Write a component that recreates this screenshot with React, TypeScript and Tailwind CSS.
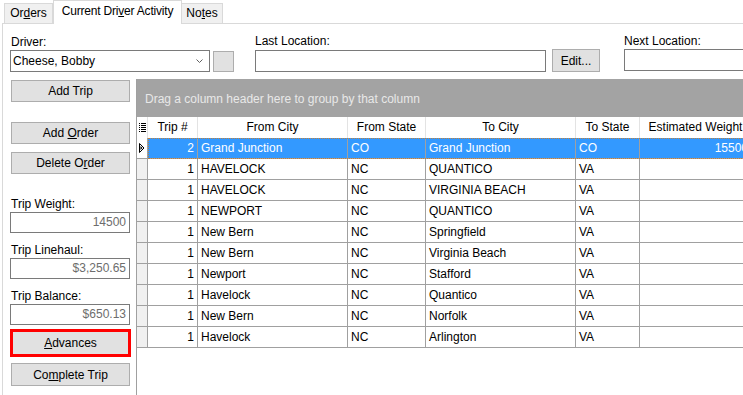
import React from 'react'

type Row = {
  trip: string
  fromCity: string
  fromState: string
  toCity: string
  toState: string
  weight: string
}

const rows: Row[] = [
  { trip: '2', fromCity: 'Grand Junction', fromState: 'CO', toCity: 'Grand Junction', toState: 'CO', weight: '15500' },
  { trip: '1', fromCity: 'HAVELOCK', fromState: 'NC', toCity: 'QUANTICO', toState: 'VA', weight: '' },
  { trip: '1', fromCity: 'HAVELOCK', fromState: 'NC', toCity: 'VIRGINIA BEACH', toState: 'VA', weight: '' },
  { trip: '1', fromCity: 'NEWPORT', fromState: 'NC', toCity: 'QUANTICO', toState: 'VA', weight: '' },
  { trip: '1', fromCity: 'New Bern', fromState: 'NC', toCity: 'Springfield', toState: 'VA', weight: '' },
  { trip: '1', fromCity: 'New Bern', fromState: 'NC', toCity: 'Virginia Beach', toState: 'VA', weight: '' },
  { trip: '1', fromCity: 'Newport', fromState: 'NC', toCity: 'Stafford', toState: 'VA', weight: '' },
  { trip: '1', fromCity: 'Havelock', fromState: 'NC', toCity: 'Quantico', toState: 'VA', weight: '' },
  { trip: '1', fromCity: 'New Bern', fromState: 'NC', toCity: 'Norfolk', toState: 'VA', weight: '' },
  { trip: '1', fromCity: 'Havelock', fromState: 'NC', toCity: 'Arlington', toState: 'VA', weight: '' },
]

const cols: { key: keyof Row; label: string; width: string; align: string }[] = [
  { key: 'trip', label: 'Trip #', width: 'w-[50px]', align: 'text-right pr-[3px]' },
  { key: 'fromCity', label: 'From City', width: 'w-[150px]', align: 'pl-[3px]' },
  { key: 'fromState', label: 'From State', width: 'w-[78px]', align: 'pl-[3px]' },
  { key: 'toCity', label: 'To City', width: 'w-[150px]', align: 'pl-[3px]' },
  { key: 'toState', label: 'To State', width: 'w-[64px]', align: 'pl-[3px]' },
  { key: 'weight', label: 'Estimated Weight', width: 'w-[112px]', align: 'text-right pr-[3px]' },
]

function WinButton({ children, className = '' }: { children: React.ReactNode; className?: string }) {
  return (
    <div
      className={`h-[22px] flex items-center justify-center bg-[#e1e1e1] border border-[#adadad] ${className}`}
    >
      {children}
    </div>
  )
}

function ReadOnlyField({ label, value }: { label: string; value: string }) {
  return (
    <div className="flex flex-col">
      <div className="h-[14px] leading-[14px] ml-[8px]">{label}</div>
      <div className="mt-[1px] ml-[7px] w-[120px] h-[21px] leading-[19px] border border-[#7a7a7a] text-right pr-[3px] text-[#6d6d6d]">
        {value}
      </div>
    </div>
  )
}

function ListIcon() {
  return (
    <svg width="7" height="10" viewBox="0 0 7 10" className="block">
      {[0, 2, 4, 6, 8].map((y) => (
        <g key={y}>
          <rect x="0" y={y} width="1" height="1" fill="#000" />
          <rect x="2" y={y} width="5" height="1" fill="#000" />
        </g>
      ))}
    </svg>
  )
}

function RowPointer() {
  return (
    <svg width="6" height="10" viewBox="0 0 6 10" className="block">
      <polygon points="0.5,0.5 5,5 0.5,9.5" fill="#fff" stroke="#000" strokeWidth="1" />
      <polygon points="1.5,3 3.5,5 1.5,7" fill="#000" />
    </svg>
  )
}

export default function App() {
  return (
    <div className="w-[743px] h-[395px] overflow-hidden bg-white text-[12px] text-black font-['Liberation_Sans',Arial,sans-serif] flex flex-col">
      {/* Tabs */}
      <div className="h-[23px] flex items-end pl-[4px] shrink-0">
        <div className="w-[49px] h-[20px] leading-[19px] text-center bg-[#f0f0f0] border border-b-0 border-[#d9d9d9]">
          Or<span className="underline">d</span>ers
        </div>
        <div className="relative z-10 -mb-px w-[129px] h-[24px] leading-[20px] text-center bg-white border border-b-0 border-[#d9d9d9] tracking-[-0.2px]">
          Current Dri<span className="underline">v</span>er Activity
        </div>
        <div className="w-[41px] h-[20px] leading-[19px] text-center bg-[#f0f0f0] border border-l-0 border-b-0 border-[#d9d9d9]">
          No<span className="underline">t</span>es
        </div>
      </div>

      {/* Page */}
      <div className="flex-1 flex flex-col ml-[2px] border-t border-l border-[#d9d9d9] min-h-0">
        {/* Top fields */}
        <div className="flex items-end pt-[10px] pl-[7px] shrink-0">
          <div className="flex flex-col">
            <div className="h-[14px] leading-[14px] ml-[1px]">Driver:</div>
            <div className="flex items-center mt-[1px]">
              <div className="w-[200px] h-[22px] border border-[#7a7a7a] flex items-center justify-between pl-[2px] pr-[6px]">
                <span>Cheese, Bobby</span>
                <svg width="7" height="4" viewBox="0 0 7 4" className="block">
                  <polyline points="0.5,0.5 3.5,3.5 6.5,0.5" fill="none" stroke="#606060" strokeWidth="1" />
                </svg>
              </div>
              <div className="ml-[3px] w-[21px] h-[21px] bg-[#e1e1e1] border border-[#adadad]" />
            </div>
          </div>

          <div className="flex flex-col ml-[21px]">
            <div className="h-[14px] leading-[14px]">Last Location:</div>
            <div className="flex items-center mt-[1px]">
              <div className="w-[291px] h-[22px] border border-[#7a7a7a]" />
              <WinButton className="ml-[6px] w-[48px] h-[23px]">Edit...</WinButton>
            </div>
          </div>

          <div className="flex flex-col ml-[24px]">
            <div className="h-[14px] leading-[14px]">Next Location:</div>
            <div className="mt-[1px] w-[290px] h-[22px] border border-[#7a7a7a] mb-[1px]" />
          </div>
        </div>

        {/* Main */}
        <div className="flex-1 flex mt-[7px] min-h-0">
          {/* Left panel */}
          <div className="w-[133px] shrink-0 flex flex-col">
            <WinButton className="mt-[1px] ml-[8px] w-[119px]">Add Trip</WinButton>
            <WinButton className="mt-[20px] ml-[8px] w-[119px]">
              <span>
                Add <span className="underline">O</span>rder
              </span>
            </WinButton>
            <WinButton className="mt-[8px] ml-[8px] w-[119px]">
              <span>
                Delete O<span className="underline">r</span>der
              </span>
            </WinButton>

            <div className="mt-[23px] flex flex-col gap-[10px]">
              <ReadOnlyField label="Trip Weight:" value="14500" />
              <ReadOnlyField label="Trip Linehaul:" value="$3,250.65" />
              <ReadOnlyField label="Trip Balance:" value="$650.13" />
            </div>

            <div className="mt-[4px] ml-[7px] w-[121px] h-[28px] border-[3px] border-[#ff0000] bg-[#e1e1e1] flex items-center justify-center">
              <span>
                <span className="underline">A</span>dvances
              </span>
            </div>
            <WinButton className="mt-[6px] ml-[8px] w-[119px] h-[23px]">
              <span>
                Co<span className="underline">m</span>plete Trip
              </span>
            </WinButton>
          </div>

          {/* Grid */}
          <div className="flex-1 flex flex-col border-l border-[#a0a0a0] min-w-0 overflow-hidden">
            <div className="h-[38px] shrink-0 bg-[#a3a3a3] text-[#e8e8e8] pl-[8px] flex items-center pt-[2px]">
              Drag a column header here to group by that column
            </div>

            {/* Header */}
            <div className="flex h-[21px] shrink-0">
              <div className="w-[11px] shrink-0 flex items-center justify-center border-r border-[#e3e3e3] pl-[1px]">
                <ListIcon />
              </div>
              {cols.map((c) => (
                <div
                  key={c.key}
                  className={`${c.width} shrink-0 h-[21px] leading-[21px] text-center border-r border-[#e3e3e3] whitespace-nowrap overflow-hidden`}
                >
                  {c.label}
                </div>
              ))}
            </div>

            {/* Rows */}
            {rows.map((r, i) => {
              const selected = i === 0
              return (
                <div key={i} className="flex h-[21px] shrink-0">
                  <div
                    className={`w-[11px] shrink-0 border-r border-b border-[#a0a0a0] flex items-center justify-center ${
                      selected ? 'bg-white' : 'bg-[#f0f0f0]'
                    }`}
                  >
                    {selected && <RowPointer />}
                  </div>
                  <div
                    className={`flex ${
                      selected
                        ? 'bg-[#3399ff] text-white outline outline-1 outline-dotted outline-[#c0803c] -outline-offset-1'
                        : ''
                    }`}
                  >
                    {cols.map((c) => (
                      <div
                        key={c.key}
                        className={`${c.width} ${c.align} shrink-0 h-[21px] leading-[20px] border-r border-b border-[#a0a0a0] whitespace-nowrap overflow-hidden`}
                      >
                        {r[c.key]}
                      </div>
                    ))}
                  </div>
                </div>
              )
            })}
          </div>
        </div>
      </div>
    </div>
  )
}
